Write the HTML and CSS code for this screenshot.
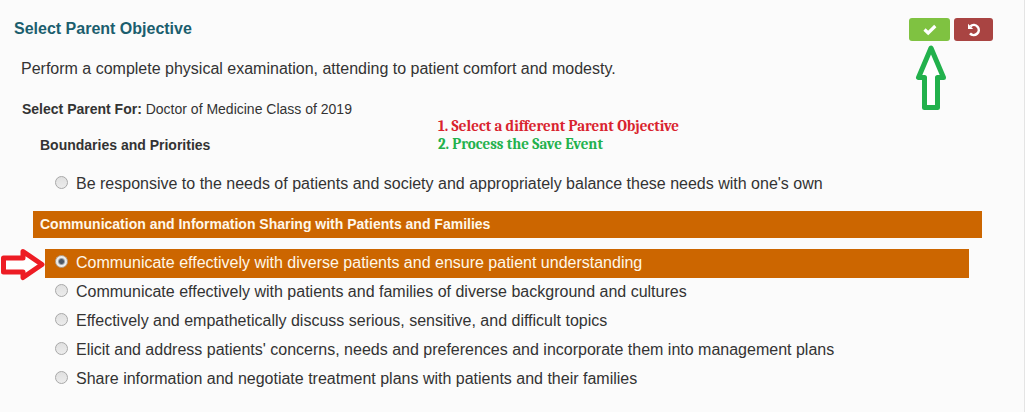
FILE: index.html
```html
<!DOCTYPE html>
<html lang="en">
<head>
<meta charset="utf-8">
<meta name="viewport" content="width=device-width, initial-scale=1">
<title>Select Parent Objective</title>
<link rel="stylesheet" href="styles.css">
</head>
<body>
<main class="panel">
  <header class="panel-header">
    <h1 class="panel-title">Select Parent Objective</h1>
    <div class="actions">
      <div class="action">
        <button class="btn btn-save" type="button" aria-label="Save">
          <svg width="14" height="12" viewBox="0 0 14 12" aria-hidden="true"><path d="M1.500 5.500 5.200 9 12.300 2" fill="none" stroke="#fff" stroke-width="3.200"/></svg>
        </button>
        <svg class="arrow-up" width="32" height="66" viewBox="0 0 32 66" aria-hidden="true"><path d="M16 3 3.500 32.500H9.500V62.500H22.500V32.500H28.500Z" fill="#fff" stroke="#22b14c" stroke-width="5" stroke-linejoin="round"/></svg>
      </div>
      <button class="btn btn-undo" type="button" aria-label="Undo">
        <svg width="14" height="14" viewBox="0 0 14 14" aria-hidden="true"><path d="M3.500 3.200A5 5 0 1 1 3 10.300" fill="none" stroke="#fff" stroke-width="2.600"/><path d="M1 0.800V6H6.200Z" fill="#fff"/></svg>
      </button>
    </div>
  </header>

  <p class="objective">Perform a complete physical examination, attending to patient comfort and modesty.</p>

  <div class="context">
    <p class="context-text"><strong>Select Parent For:</strong> Doctor of Medicine Class of 2019</p>
    <ol class="steps">
      <li class="step-select">1. Select a different Parent Objective</li>
      <li class="step-save">2. Process the Save Event</li>
    </ol>
  </div>

  <form class="groups">
    <section class="group">
      <h2 class="group-title">Boundaries and Priorities</h2>
      <div class="options">
        <label class="option"><input class="radio" type="radio" name="parent">Be responsive to the needs of patients and society and appropriately balance these needs with one's own</label>
      </div>
    </section>
    <section class="group">
      <h2 class="group-title active">Communication and Information Sharing with Patients and Families</h2>
      <div class="options">
        <label class="option active"><svg class="arrow-right" width="44" height="32" viewBox="0 0 44 32" aria-hidden="true"><path d="M2.500 9H22V2.500L41 15.500 22 28.500V23H2.500Z" fill="#fff" stroke="#ed1c24" stroke-width="5" stroke-linejoin="round"/></svg><input class="radio" type="radio" name="parent" checked>Communicate effectively with diverse patients and ensure patient understanding</label>
        <label class="option"><input class="radio" type="radio" name="parent">Communicate effectively with patients and families of diverse background and cultures</label>
        <label class="option"><input class="radio" type="radio" name="parent">Effectively and empathetically discuss serious, sensitive, and difficult topics</label>
        <label class="option"><input class="radio" type="radio" name="parent">Elicit and address patients' concerns, needs and preferences and incorporate them into management plans</label>
        <label class="option"><input class="radio" type="radio" name="parent">Share information and negotiate treatment plans with patients and their families</label>
      </div>
    </section>
  </form>
</main>
</body>
</html>
```
FILE: styles.css
```css
* {
  box-sizing: border-box;
}

body {
  margin: 0;
  background: #fbfbfb;
  color: #333;
  font: 16px/24px "Liberation Sans", Arial, sans-serif;
}

h1, h2, p, ol {
  margin: 0;
}

.panel {
  min-height: 100vh;
  padding: 18px 31px 16px 14px;
  border-right: 1px solid #e4e4e4;
}

.panel-header {
  display: flex;
  justify-content: space-between;
}

.panel-title {
  color: #1b5e6e;
  font-size: 16px;
  line-height: 22px;
}

.actions {
  display: flex;
  gap: 4px;
}

.action {
  position: relative;
  display: flex;
}

.btn {
  display: flex;
  align-items: center;
  justify-content: center;
  height: 23px;
  padding: 0;
  border: 0;
  border-radius: 3px;
}

.btn-save {
  width: 41px;
  background: #7fc241;
}

.btn-undo {
  width: 39px;
  background: #a94442;
}

.arrow-up {
  position: absolute;
  top: 27px;
  left: 6px;
}

.objective {
  margin: 16px 0 16px 7px;
}

.context {
  position: relative;
  margin-left: 8px;
  font-size: 14px;
}

.steps {
  position: absolute;
  top: 20px;
  left: 416px;
  padding: 0;
  list-style: none;
  font: bold 15px/18px Cambria, "Liberation Serif", serif;
}

.step-select {
  color: #d9232e;
}

.step-save {
  color: #22b14c;
}

.groups {
  display: flex;
  flex-direction: column;
  gap: 12px;
  margin: 11px 11px 0 19px;
}

.group-title {
  padding: 0 7px;
  font-size: 14px;
  line-height: 27px;
}

.options {
  margin: 11px 13px 0 12px;
}

.option {
  position: relative;
  display: flex;
  gap: 8px;
  padding: 0 10px 2px;
  line-height: 27px;
}

.active {
  background: #cc6600;
  color: #fff8ea;
}

.radio {
  appearance: none;
  flex: none;
  width: 13px;
  height: 13px;
  margin: 6px 0 0;
  border: 1px solid #a8a8a8;
  border-radius: 50%;
  background: linear-gradient(#e0e0e0, #ececec);
}

.radio:checked {
  border-color: #b5a595;
  background: radial-gradient(circle, #4d5866 0 2px, #ececec 4px);
}

.arrow-right {
  position: absolute;
  top: 0;
  left: -44px;
}
```
